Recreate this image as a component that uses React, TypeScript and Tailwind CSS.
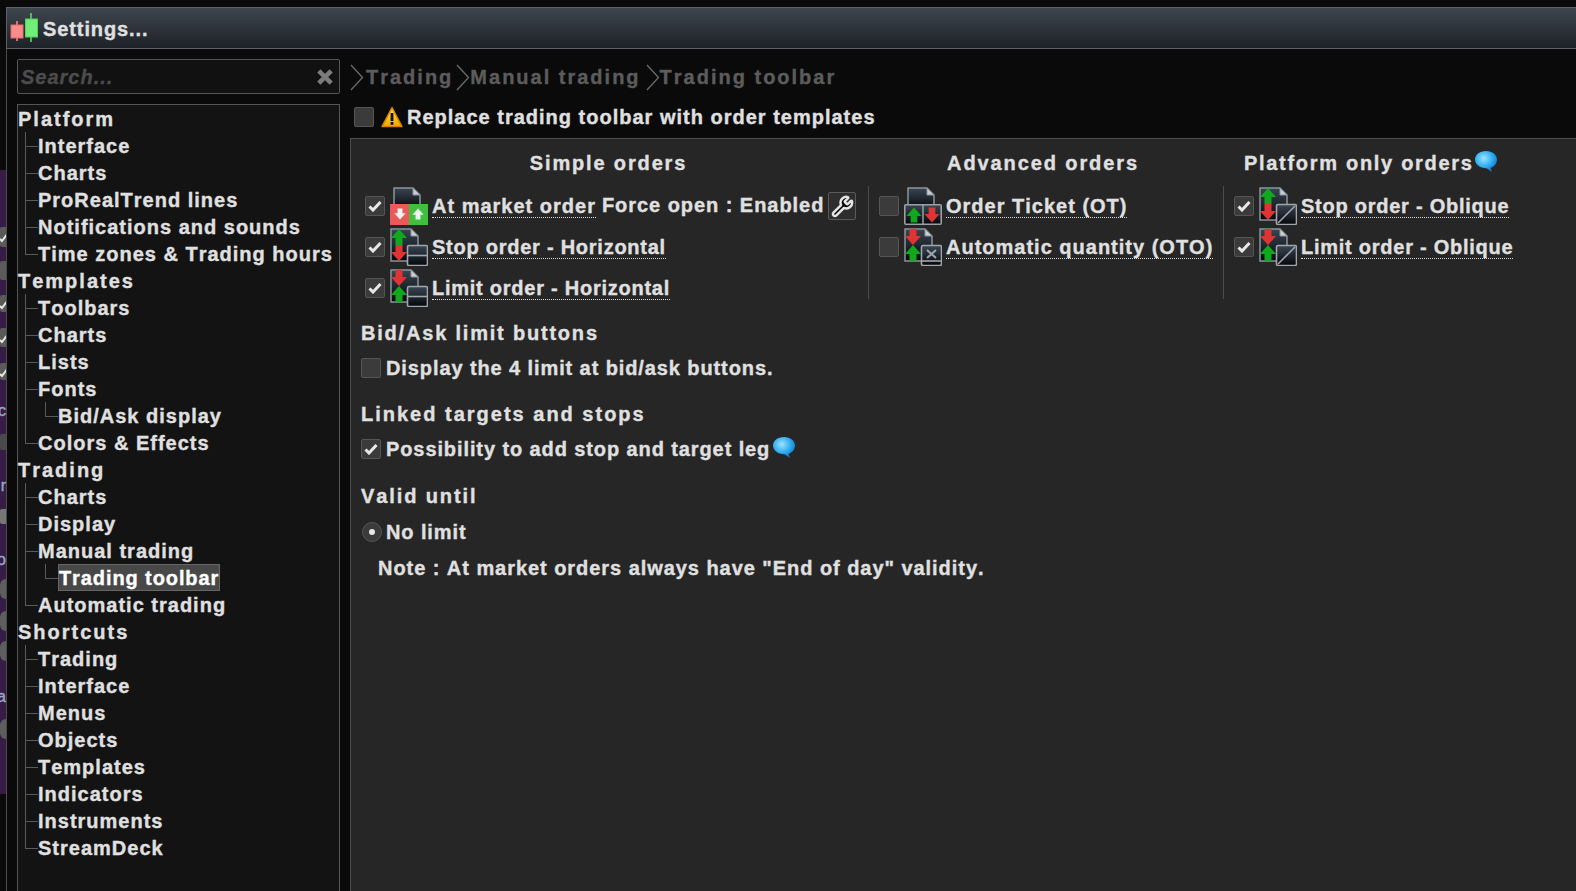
import React from "react";
import { Wrench } from "lucide-react";

const Defs = () => (
  <defs>
    <linearGradient id="docFill" x1="0" y1="0" x2="0" y2="1">
      <stop offset="0" stopColor="#3a4654" />
      <stop offset="1" stopColor="#05070a" />
    </linearGradient>
    <radialGradient id="bubbleFill" cx="0.4" cy="0.35" r="0.7">
      <stop offset="0" stopColor="#9be4ff" />
      <stop offset="0.6" stopColor="#2aa8f0" />
      <stop offset="1" stopColor="#0b6fc4" />
    </radialGradient>
    <linearGradient id="warnFill" x1="0" y1="0" x2="0" y2="1">
      <stop offset="0" stopColor="#ffe040" />
      <stop offset="1" stopColor="#f5a800" />
    </linearGradient>
  </defs>
);

const Up = ({ x, y, c = "#12a81e", s = 1 }: { x: number; y: number; c?: string; s?: number }) => (
  <path transform={`translate(${x} ${y}) scale(${s})`} d="M0 -8 L8 1 L3.5 1 L3.5 8 L-3.5 8 L-3.5 1 L-8 1 Z" fill={c} />
);
const Down = ({ x, y, c = "#e03434", s = 1 }: { x: number; y: number; c?: string; s?: number }) => (
  <path transform={`translate(${x} ${y}) scale(${s})`} d="M0 8 L8 -1 L3.5 -1 L3.5 -8 L-3.5 -8 L-3.5 -1 L-8 -1 Z" fill={c} />
);

const Doc = ({ tall = true }: { tall?: boolean }) => (
  <path
    d={tall ? "M1 1 H21 L28 8 V33 H1 Z" : "M4 1 H23 L30 8 V22 H4 Z"}
    fill="url(#docFill)"
    stroke="#8b949c"
    strokeWidth="1.5"
  />
);
const Fold = ({ x = 21 }: { x?: number }) => (
  <path d={`M${x} 1 V8 H${x + 7} Z`} fill="#c8ced3" stroke="#8b949c" strokeWidth="1" />
);

const Box = ({ children }: { children?: React.ReactNode }) => (
  <g>
    <rect x="17.5" y="17.5" width="20" height="20" rx="1.5" fill="url(#docFill)" stroke="#a0a6ab" strokeWidth="1.6" />
    {children}
  </g>
);

type Kind = "market" | "stopH" | "limitH" | "ot" | "oto" | "stopO" | "limitO";

const OrderIcon = ({ kind }: { kind: Kind }) => {
  const stop = kind === "stopH" || kind === "stopO";
  return (
    <svg width="38" height="38" viewBox="0 0 38 38" className="flex-none">
      <Defs />
      {kind === "market" && (
        <>
          <Doc tall={false} />
          <Fold x={23} />
          <rect x="0" y="17" width="19" height="21" fill="#ea5a5a" />
          <rect x="19" y="17" width="19" height="21" fill="#3fbe3f" />
          <Down x={10} y={27} c="#f2f2f2" s={0.7} />
          <Up x={28} y={27} c="#e9f6e9" s={0.7} />
        </>
      )}
      {kind === "ot" && (
        <>
          <Doc tall={false} />
          <Fold x={23} />
          <rect x="0.8" y="17.8" width="36.4" height="19.4" rx="1" fill="url(#docFill)" stroke="#9aa0a5" strokeWidth="1.6" />
          <line x1="19" y1="18" x2="19" y2="37" stroke="#9aa0a5" strokeWidth="1.5" />
          <Up x={10} y={28} s={0.95} />
          <Down x={28} y={28} s={0.95} />
        </>
      )}
      {kind !== "market" && kind !== "ot" && (
        <>
          <Doc />
          <Fold />
          {stop ? <Up x={9} y={9} /> : <Down x={9} y={9} />}
          {stop ? <Down x={9} y={25} /> : <Up x={9} y={25} />}
          <Box />
          {(kind === "stopH" || kind === "limitH") && (
            <line x1="18" y1="27.5" x2="37" y2="27.5" stroke="#a0a6ab" strokeWidth="1.6" />
          )}
          {(kind === "stopO" || kind === "limitO") && (
            <line x1="19" y1="36" x2="36" y2="19" stroke="#a0a6ab" strokeWidth="1.6" />
          )}
          {kind === "oto" && (
            <>
              <line x1="18" y1="33" x2="37" y2="33" stroke="#a0a6ab" strokeWidth="1.6" />
              <path d="M23 22 L32 30 M32 22 L23 30" stroke="#a0a6ab" strokeWidth="2" />
            </>
          )}
        </>
      )}
    </svg>
  );
};

const Bubble = ({ className = "" }: { className?: string }) => (
  <svg width="24" height="22" viewBox="0 0 24 22" className={`flex-none ${className}`}>
    <Defs />
    <path d="M12 0 C18.5 0 23 3.8 23 8.5 C23 13 19.5 16 16.5 16.8 L18 21 L12.5 17.2 C5.5 17.2 1 13.2 1 8.5 C1 3.8 5.5 0 12 0 Z" fill="url(#bubbleFill)" />
  </svg>
);

const Check = ({ on = false, className = "" }: { on?: boolean; className?: string }) => (
  <span className={`flex h-[20px] w-[20px] flex-none items-center justify-center rounded-[2px] border border-[#555555] bg-[#3b3b3b] ${className}`}>
    {on && (
      <svg width="14" height="12" viewBox="0 0 14 12">
        <path d="M1.5 6.5 L5 10 L12.5 2" fill="none" stroke="#e8e8e8" strokeWidth="3" />
      </svg>
    )}
  </span>
);

const Chevron = () => (
  <svg width="14" height="27" viewBox="0 0 14 27" className="flex-none">
    <path d="M1 1 L12.5 13.5 L1 26" fill="none" stroke="#6a6a6a" strokeWidth="1.3" />
  </svg>
);

const Connector = ({ last = false }: { last?: boolean }) => (
  <span className="relative block h-full w-[13px] flex-none">
    <span className={`absolute left-0 top-0 w-px bg-[#5a5a5a] ${last ? "h-1/2" : "h-full"}`} />
    <span className="absolute left-0 top-1/2 h-px w-full bg-[#5a5a5a]" />
  </span>
);

type Node = { label: string; last?: boolean; sel?: boolean; child?: boolean };
const tree: { title: string; items: Node[] }[] = [
  {
    title: "Platform",
    items: [
      { label: "Interface" },
      { label: "Charts" },
      { label: "ProRealTrend lines" },
      { label: "Notifications and sounds" },
      { label: "Time zones & Trading hours", last: true },
    ],
  },
  {
    title: "Templates",
    items: [
      { label: "Toolbars" },
      { label: "Charts" },
      { label: "Lists" },
      { label: "Fonts" },
      { label: "Bid/Ask display", child: true, last: true },
      { label: "Colors & Effects", last: true },
    ],
  },
  {
    title: "Trading",
    items: [
      { label: "Charts" },
      { label: "Display" },
      { label: "Manual trading" },
      { label: "Trading toolbar", child: true, last: true, sel: true },
      { label: "Automatic trading", last: true },
    ],
  },
  {
    title: "Shortcuts",
    items: [
      { label: "Trading" },
      { label: "Interface" },
      { label: "Menus" },
      { label: "Objects" },
      { label: "Templates" },
      { label: "Indicators" },
      { label: "Instruments" },
      { label: "StreamDeck", last: true },
    ],
  },
];

const Row = ({ children }: { children: React.ReactNode }) => (
  <div className="flex h-[27px] items-center whitespace-nowrap">{children}</div>
);

const TreeItem = ({ n }: { n: Node }) => (
  <Row>
    <span className="ml-[7px] flex h-full flex-none">
      {n.child ? (
        <>
          <span className="block h-full w-[20px] flex-none border-l border-[#5a5a5a]" />
          <Connector last />
        </>
      ) : (
        <Connector last={n.last} />
      )}
    </span>
    <span
      className={
        n.sel
          ? "flex h-[27px] items-center border border-[#666666] bg-[#484848] tracking-[0.9px] text-white"
          : "tracking-[1px]"
      }
    >
      {n.label}
    </span>
  </Row>
);

const Order = ({
  on,
  kind,
  label,
  extra,
  tight,
}: {
  on: boolean;
  kind: Kind;
  label: string;
  extra?: React.ReactNode;
  tight?: boolean;
}) => (
  <div className="flex h-[41px] items-center">
    <Check on={on} className="-mt-[1px]" />
    <span className="ml-[5px] mr-[4px] -mt-[2px] flex-none">
      <OrderIcon kind={kind} />
    </span>
    <span
      className={`whitespace-nowrap border-b border-dotted border-[#dddddd] leading-[22px] ${
        tight ? "tracking-[0.75px]" : "tracking-[1px]"
      }`}
    >
      {label}
    </span>
    {extra}
  </div>
);

const StripCheck = ({ className }: { className: string }) => (
  <span className={`flex w-[6px] items-center overflow-hidden rounded-l-[2px] bg-[#5a5a5a] ${className}`}>
    <svg width="8" height="12" viewBox="0 0 8 12" className="flex-none">
      <path d="M0 8 L2 10 L8 2" fill="none" stroke="#e8e8e8" strokeWidth="2" />
    </svg>
  </span>
);
const StripText = ({ className, children }: { className: string; children: string }) => (
  <span className={`flex h-[15px] w-[6px] justify-end overflow-hidden text-[16px] font-normal leading-[15px] tracking-normal text-[#9aa8c8] ${className}`}>
    {children}
  </span>
);
const StripDot = ({ className }: { className: string }) => (
  <span className={`block h-[20px] w-[6px] rounded-l-full bg-[#5e5e5e] ${className}`} />
);

export default function App() {
  return (
    <div className="flex h-[891px] w-[1576px] overflow-hidden bg-[#0a0a0a] font-['Liberation_Sans',Arial,sans-serif] text-[20px] font-bold tracking-[0.9px] text-[#e0e0e0] [font-kerning:none] [-webkit-text-stroke:0.35px_currentColor]">
      {/* the desktop behind the window */}
      <div className="w-[6px] flex-none pt-[170px]">
        <div className="flex h-[624px] flex-col overflow-hidden bg-[#351d45]">
          <StripCheck className="mt-[57px] h-[20px]" />
          <span className="mt-[14px] block h-[19px] w-[6px] rounded-l-[2px] bg-[#5a5a5a]" />
          <StripCheck className="mt-[15px] h-[17px]" />
          <StripCheck className="mt-[16px] h-[19px]" />
          <StripCheck className="mt-[16px] h-[17px]" />
          <StripText className="mt-[23px]">ic</StripText>
          <span className="mt-[16px] block h-[16px] w-[6px] rounded-l-[2px] bg-[#4a4a4a]" />
          <StripText className="mt-[28px]">r</StripText>
          <span className="mt-[16px] block h-[15px] w-[6px] rounded-l-[2px] bg-[#777777]" />
          <StripText className="mt-[28px]">o</StripText>
          <StripDot className="mt-[12px]" />
          <StripDot className="mt-[12px]" />
          <StripDot className="mt-[10px]" />
          <StripText className="mt-[28px]">a</StripText>
          <StripDot className="mt-[15px]" />
        </div>
      </div>

      <div className="flex min-w-0 flex-1 flex-col pt-[7px]">
        {/* title bar */}
        <div className="flex h-[42px] flex-none items-center border-y border-l border-[#5c6268] bg-gradient-to-b from-[#3f464e] to-[#1d2228] pl-[3px]">
          <svg width="29" height="30" viewBox="0 0 29 30" className="flex-none">
            <line x1="7" y1="8" x2="7" y2="28" stroke="#ff8c8c" strokeWidth="1.5" />
            <rect x="1" y="12" width="12" height="13" fill="#ff8c8c" stroke="#e86a6a" />
            <line x1="21" y1="0" x2="21" y2="29" stroke="#5fe06a" strokeWidth="1.5" />
            <rect x="15.5" y="6" width="12" height="18" fill="#72ee78" stroke="#50d05a" />
          </svg>
          <span className="ml-[4px] pt-[2px]">Settings...</span>
        </div>

        <div className="flex min-h-0 flex-1 border-l border-[#4c4c4c] pl-[10px] pt-[10px]">
          {/* sidebar */}
          <div className="flex w-[323px] flex-none flex-col">
            <div className="flex h-[35px] flex-none items-center justify-between rounded-[2px] border border-[#555555] bg-[#111111] pl-[3px] pr-[5px]">
              <span className="italic tracking-[1px] text-[#4c4c4c]">Search...</span>
              <svg width="18" height="18" viewBox="0 0 16 16">
                <path d="M2.5 2.5 L13.5 13.5 M13.5 2.5 L2.5 13.5" stroke="#7c7c7c" strokeWidth="4" />
              </svg>
            </div>
            <div className="mt-[10px] min-h-0 flex-1 border border-b-0 border-[#555555] bg-[#131313]">
              {tree.map((g) => (
                <div key={g.title}>
                  <Row>
                    <span className="tracking-[2px]">{g.title}</span>
                  </Row>
                  {g.items.map((n) => (
                    <TreeItem key={n.label} n={n} />
                  ))}
                </div>
              ))}
            </div>
          </div>

          {/* main */}
          <div className="flex min-w-0 flex-1 flex-col pl-[10px]">
            <div className="flex h-[36px] flex-none items-center tracking-[2px] text-[#5c5c5c]">
              <Chevron />
              <span className="ml-[2px]">Trading</span>
              <span className="ml-[3px]">
                <Chevron />
              </span>
              <span>Manual trading</span>
              <span className="ml-[5px]">
                <Chevron />
              </span>
              <span>Trading toolbar</span>
            </div>
            <div className="flex h-[43px] flex-none items-center pl-[4px]">
              <Check />
              <svg width="22" height="22" viewBox="0 0 22 22" className="ml-[7px] flex-none">
                <Defs />
                <path d="M11 1.5 L21 20.5 H1 Z" fill="url(#warnFill)" stroke="#d97f00" strokeWidth="1.5" strokeLinejoin="round" />
                <rect x="9.6" y="7" width="2.8" height="8" fill="#111111" />
                <rect x="9.6" y="16" width="2.8" height="2.8" fill="#111111" />
              </svg>
              <span className="ml-[4px] tracking-[1px]">Replace trading toolbar with order templates</span>
            </div>

            <div className="min-h-0 flex-1 border-l border-t border-[#4c4c4c] bg-[#262626] pl-[10px]">
              <div className="-ml-[10px] flex h-[47px] items-center">
                <div className="flex w-[515px] flex-none justify-center tracking-[1.85px]">Simple orders</div>
                <div className="flex w-[354px] flex-none justify-center tracking-[1.9px]">Advanced orders</div>
                <div className="flex items-center pl-[24px]">
                  <span className="tracking-[1.7px]">Platform only orders</span>
                  <Bubble className="-mt-[2px]" />
                </div>
              </div>

              <div className="-ml-[10px] flex h-[113px]">
                <div className="w-[518px] flex-none border-r border-[#4c4c4c] pl-[14px]">
                  <Order
                    on
                    kind="market"
                    label="At market order"
                    extra={
                      <>
                        <span className="ml-[6px] -mt-[3px] whitespace-nowrap tracking-[0.95px]">Force open : Enabled</span>
                        <span className="ml-[4px] -mt-[1px] flex h-[28px] w-[28px] flex-none items-center justify-center rounded-[2px] border border-[#5a5a5a] bg-[#2e2e2e]">
                          <Wrench size={23} strokeWidth={2.6} color="#e4e4e4" fill="#000000" />
                        </span>
                      </>
                    }
                  />
                  <Order on kind="stopH" label="Stop order - Horizontal" tight />
                  <Order on kind="limitH" label="Limit order - Horizontal" tight />
                </div>
                <div className="w-[355px] flex-none border-r border-[#4c4c4c] pl-[10px]">
                  <Order on={false} kind="ot" label="Order Ticket (OT)" />
                  <Order on={false} kind="oto" label="Automatic quantity (OTO)" />
                </div>
                <div className="flex-1 pl-[10px]">
                  <Order on kind="stopO" label="Stop order - Oblique" tight />
                  <Order on kind="limitO" label="Limit order - Oblique" tight />
                </div>
              </div>

              <div className="mt-[16px] flex h-[35px] items-center tracking-[1.8px]">Bid/Ask limit buttons</div>
              <div className="flex h-[35px] items-center gap-[5px]">
                <Check />
                <span>Display the 4 limit at bid/ask buttons.</span>
              </div>
              <div className="mt-[11px] flex h-[35px] items-center tracking-[2px]">Linked targets and stops</div>
              <div className="flex h-[35px] items-center gap-[5px]">
                <Check on />
                <span>Possibility to add stop and target leg</span>
                <Bubble className="-ml-[3px] -mt-[1px]" />
              </div>
              <div className="mt-[12px] flex h-[36px] items-center tracking-[1.9px]">Valid until</div>
              <div className="flex h-[36px] items-center gap-[4px]">
                <span className="ml-[1px] flex h-[20px] w-[20px] flex-none items-center justify-center rounded-full border border-[#555555] bg-[#3b3b3b]">
                  <span className="h-[6px] w-[6px] rounded-full bg-[#e8e8e8]" />
                </span>
                <span>No limit</span>
              </div>
              <div className="flex h-[36px] items-center pl-[17px] tracking-[0.95px]">Note : At market orders always have "End of day" validity.</div>
            </div>
          </div>
        </div>
      </div>
    </div>
  );
}
